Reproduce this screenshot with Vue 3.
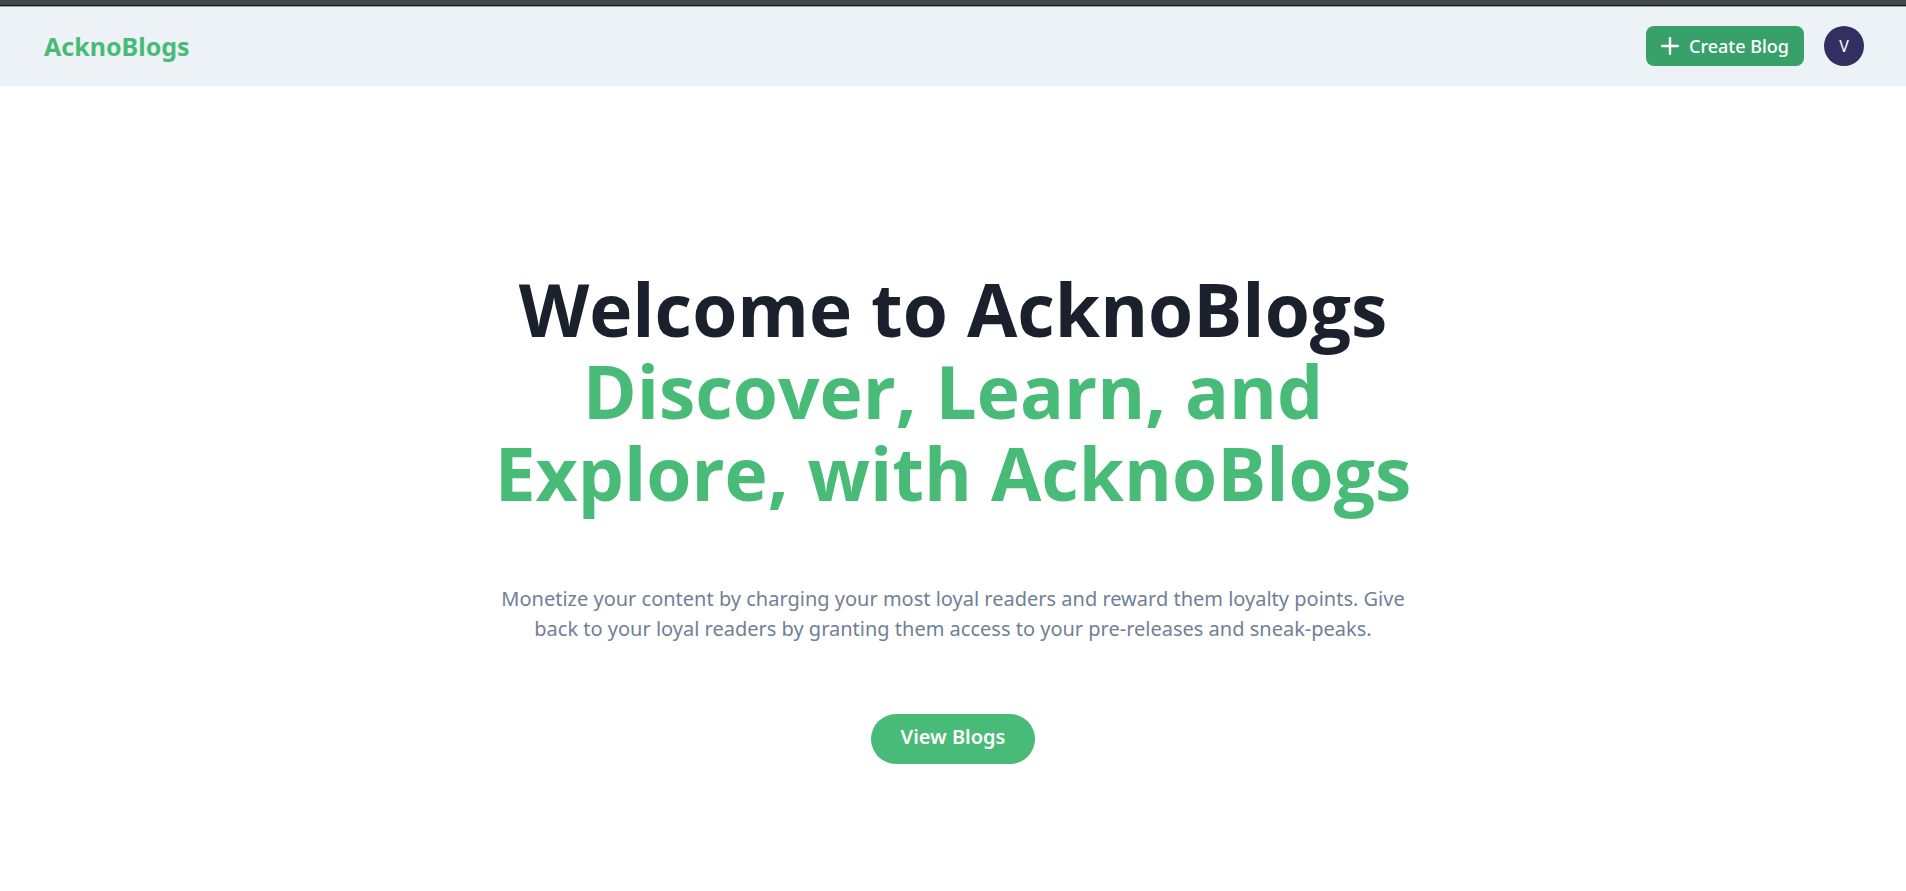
<script setup>
const brand = 'AcknoBlogs'
const user = { initial: 'V' }
</script>

<template>
  <div class="page">
    <div class="window-edge"></div>
    <header class="navbar">
      <a class="brand" href="#">{{ brand }}</a>
      <nav class="actions">
        <button class="create" type="button">
          <svg class="plus" viewBox="0 0 18 18" aria-hidden="true">
            <path d="M9 1.2V16.8M1.2 9H16.8" />
          </svg>
          Create Blog
        </button>
        <button class="avatar" type="button" aria-label="Account menu">{{ user.initial }}</button>
      </nav>
    </header>
    <main class="hero">
      <h1 class="title">
        <span class="welcome">Welcome to {{ brand }}</span>
        <span class="accent">Discover, Learn, and<br />Explore, with {{ brand }}</span>
      </h1>
      <p class="lead">
        Monetize your content by charging your most loyal readers and reward them
        loyalty points. Give back to your loyal readers by granting them access to
        your pre-releases and sneak-peaks.
      </p>
      <a class="view" href="#">View Blogs</a>
    </main>
  </div>
</template>

<style>
body {
  background: #fff;
}
</style>

<style scoped>
.page {
  font-family: "Noto Sans", sans-serif;
  color: #1a202c;
}

.window-edge {
  height: 5px;
  background: #41484a;
  border-bottom: 1px solid #15171a;
}

.navbar {
  display: flex;
  align-items: center;
  justify-content: space-between;
  height: 80px;
  padding: 0 42px 0 44px;
  box-shadow: inset 0 1px 0 #a3a5a9;
  background: #edf2f7;
}

.brand {
  color: #48bb78;
  font-size: 25px;
  font-weight: 700;
  line-height: 30px;
  text-decoration: none;
}

.actions {
  display: flex;
  align-items: center;
  gap: 20px;
}

.create {
  display: flex;
  align-items: center;
  gap: 10px;
  height: 40px;
  padding: 0 15px;
  border: 0;
  border-radius: 8px;
  background: #38a169;
  color: #fff;
  font: 500 18px "Noto Sans", sans-serif;
}

.plus {
  width: 18px;
  height: 18px;
  fill: none;
  stroke: currentColor;
  stroke-width: 2.4;
  stroke-linecap: round;
}

.avatar {
  width: 40px;
  height: 40px;
  padding: 0;
  border: 0;
  border-radius: 50%;
  background: #322f61;
  color: #fff;
  font: 400 16px "Noto Sans", sans-serif;
}

.hero {
  display: flex;
  flex-direction: column;
  align-items: center;
  max-width: 920px;
  margin: 0 auto;
  padding: 182px 20px 60px;
  text-align: center;
}

.title {
  margin: 0;
  font-family: "Open Sans", "Noto Sans", sans-serif;
  font-size: 73px;
  font-weight: 700;
  line-height: 82px;
}

.welcome,
.accent {
  display: block;
}

.accent {
  color: #48bb78;
}

.lead {
  margin: 70px 0 0;
  color: #718096;
  font-size: 20px;
  line-height: 30px;
}

.view {
  display: flex;
  align-items: center;
  height: 44px;
  margin-top: 70px;
  padding: 0 30px 6px;
  border-radius: 25px;
  background: #48bb78;
  color: #fff;
  font-size: 20px;
  font-weight: 600;
  text-decoration: none;
}
</style>
